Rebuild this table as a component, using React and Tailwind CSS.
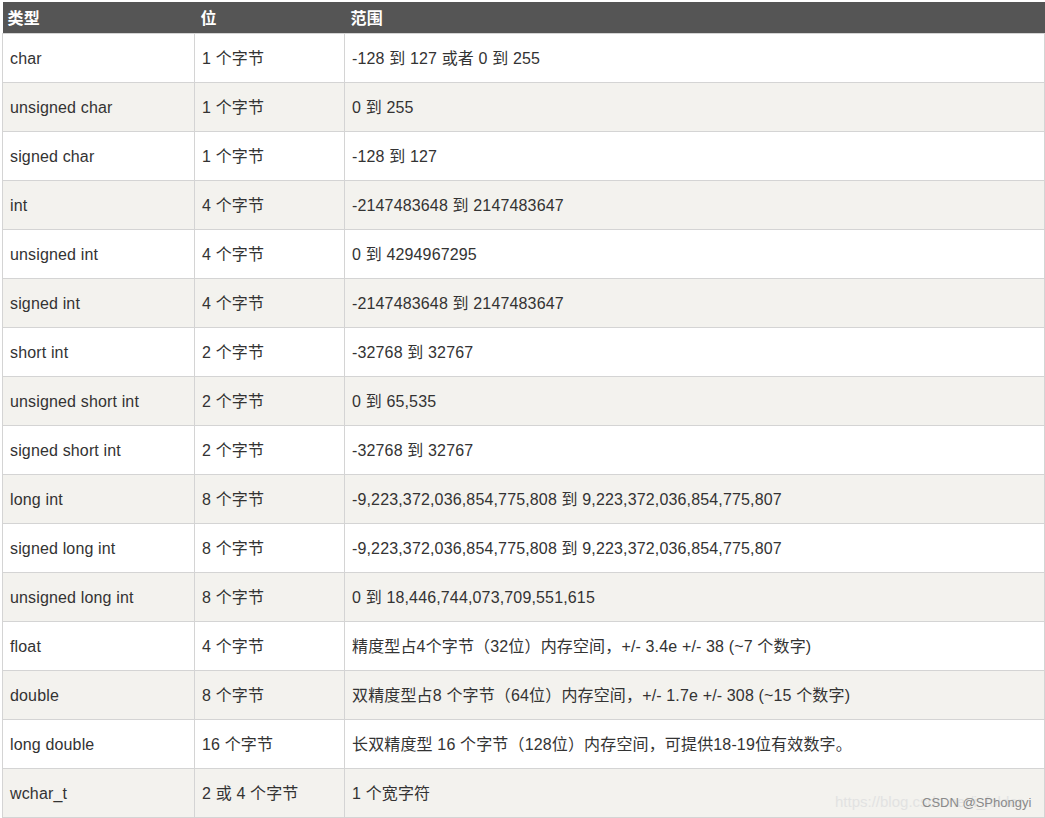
const rows = [
  ["char", "1 个字节", "-128 到 127 或者 0 到 255"],
  ["unsigned char", "1 个字节", "0 到 255"],
  ["signed char", "1 个字节", "-128 到 127"],
  ["int", "4 个字节", "-2147483648 到 2147483647"],
  ["unsigned int", "4 个字节", "0 到 4294967295"],
  ["signed int", "4 个字节", "-2147483648 到 2147483647"],
  ["short int", "2 个字节", "-32768 到 32767"],
  ["unsigned short int", "2 个字节", "0 到 65,535"],
  ["signed short int", "2 个字节", "-32768 到 32767"],
  ["long int", "8 个字节", "-9,223,372,036,854,775,808 到 9,223,372,036,854,775,807"],
  ["signed long int", "8 个字节", "-9,223,372,036,854,775,808 到 9,223,372,036,854,775,807"],
  ["unsigned long int", "8 个字节", "0 到 18,446,744,073,709,551,615"],
  ["float", "4 个字节", "精度型占4个字节（32位）内存空间，+/- 3.4e +/- 38 (~7 个数字)"],
  ["double", "8 个字节", "双精度型占8 个字节（64位）内存空间，+/- 1.7e +/- 308 (~15 个数字)"],
  ["long double", "16 个字节", "长双精度型 16 个字节（128位）内存空间，可提供18-19位有效数字。"],
  ["wchar_t", "2 或 4 个字节", "1 个宽字符"],
];

export default function App() {
  return (
    <div className="bg-white min-h-[818px] pt-[2px] pl-[2px] font-['Liberation_Sans','Noto_Sans_CJK_SC',sans-serif] text-[16px] tracking-[0.15px] text-[#333]">
      <table className="w-[1043px] border-collapse table-fixed">
        <colgroup>
          <col className="w-[192px]" />
          <col className="w-[150px]" />
          <col />
        </colgroup>
        <thead>
          <tr className="h-[31px] bg-[#555] text-white">
            <th className="text-left font-bold px-[5px] pt-[3px] align-middle">类型</th>
            <th className="text-left font-bold px-[6px] pt-[3px] align-middle">位</th>
            <th className="text-left font-bold px-[6px] pt-[3px] align-middle">范围</th>
          </tr>
        </thead>
        <tbody>
          {rows.map((r, i) => (
            <tr key={i} className={i % 2 === 1 ? "bg-[#f3f2ee]" : "bg-white"}>
              <td className="h-[49px] border border-[#d4d4d4] px-[7px] pt-[2px] align-middle">{r[0]}</td>
              <td className="h-[49px] border border-[#d4d4d4] px-[7px] pt-[2px] align-middle">{r[1]}</td>
              <td className="relative h-[49px] border border-[#d4d4d4] px-[7px] pt-[2px] align-middle">
                {r[2]}
                {i === rows.length - 1 && (
                  <>
                    <span className="absolute left-[490px] top-[25px] text-[15px] leading-none tracking-normal whitespace-nowrap text-[#e2e2e2]">
                      https://blog.csdn.net/i_folder
                    </span>
                    <span className="absolute left-[577px] top-[27px] text-[13px] leading-none tracking-normal whitespace-nowrap text-[#8a8a8a]">
                      CSDN @SPhongyi
                    </span>
                  </>
                )}
              </td>
            </tr>
          ))}
        </tbody>
      </table>
    </div>
  );
}
